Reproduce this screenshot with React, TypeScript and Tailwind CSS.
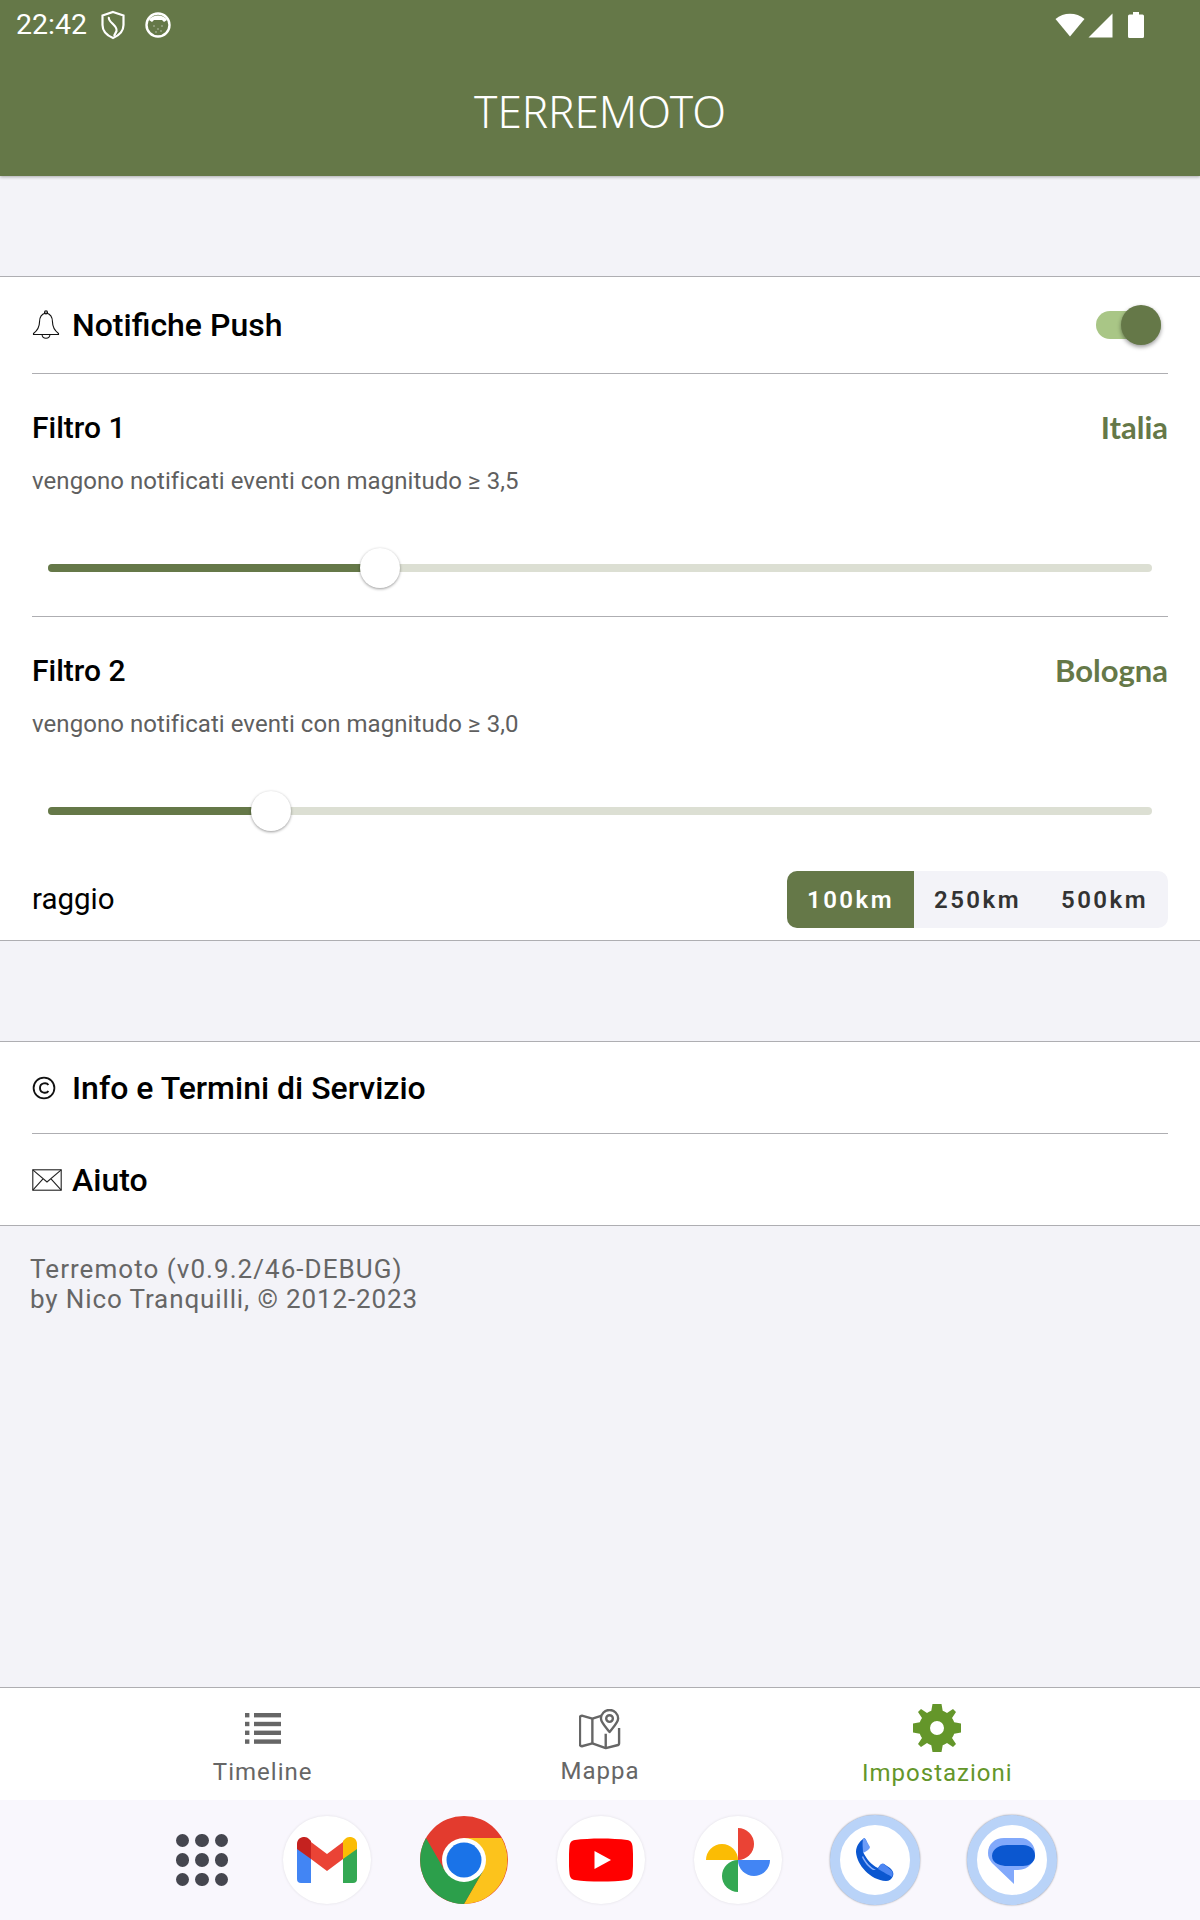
import React from "react";

const Shield = () => (
  <svg width="24" height="30" viewBox="0 0 24 30" fill="none" stroke="#fff" strokeWidth="2.2">
    <path d="M12 2 L22.5 5.5 V15 C22.5 21 18 25.5 12 28 C6 25.5 1.5 21 1.5 15 V5.5 Z" />
    <path d="M8 7 C6 12 17 15 15.5 21 L13 26" />
  </svg>
);

const Cat = () => (
  <svg width="26" height="26" viewBox="0 0 26 26">
    <circle cx="13" cy="13" r="11.5" fill="none" stroke="#fff" strokeWidth="2.4" />
    <path d="M4 8 C7 2 19 2 22 8 L19 10 L17 8 H9 L7 10 Z" fill="#fff" />
    <g fill="#fff" opacity="0.7">
      <circle cx="9" cy="14" r="0.7" /><circle cx="13" cy="17" r="0.7" /><circle cx="17" cy="14" r="0.7" /><circle cx="11" cy="20" r="0.7" /><circle cx="16" cy="19" r="0.7" />
    </g>
  </svg>
);

const StatusRight = () => (
  <div className="flex items-center">
    <svg width="30" height="26" viewBox="0 0 30 26"><path d="M0.5 7 C8.5 0 21.5 0 29.5 7 L15 24.5 Z" fill="#fff" /></svg>
    <svg width="25" height="25" viewBox="0 0 25 25" className="ml-[3px]"><path d="M24.5 0.5 V24.5 H0.5 Z" fill="#fff" /></svg>
    <svg width="16" height="26" viewBox="0 0 16 26" className="ml-[15px]"><path d="M5 0 H11 V2.5 H14.5 A1.5 1.5 0 0 1 16 4 V24.5 A1.5 1.5 0 0 1 14.5 26 H1.5 A1.5 1.5 0 0 1 0 24.5 V4 A1.5 1.5 0 0 1 1.5 2.5 H5 Z" fill="#fff" /></svg>
  </div>
);

const Bell = () => (
  <svg width="28" height="30" viewBox="0 0 28 30" fill="none" stroke="#111" strokeWidth="1.1" className="shrink-0">
    <path d="M14 3 C9 4 7.5 8 7.5 12 C7.5 17 6 20 1.5 23.5 V24.5 H26.5 V23.5 C22 20 20.5 17 20.5 12 C20.5 8 19 4 14 3 Z" />
    <circle cx="14" cy="2.4" r="1.5" />
    <path d="M10 24.5 C10.5 29.5 17.5 29.5 18 24.5" />
  </svg>
);

const Copy = () => (
  <svg width="24" height="24" viewBox="0 0 24 24" fill="none" stroke="#111" strokeWidth="1.8" className="shrink-0">
    <circle cx="12" cy="12" r="10.4" />
    <path d="M16.4 9 C14.8 6.4 8 6.4 8 12 C8 17.6 14.8 17.6 16.4 15" strokeWidth="1.9" />
  </svg>
);

const Mail = () => (
  <svg width="30" height="22" viewBox="0 0 30 22" fill="none" stroke="#222" strokeWidth="1.1" className="shrink-0">
    <rect x="0.8" y="0.8" width="28.4" height="20.4" />
    <path d="M0.8 0.8 L15 13 L29.2 0.8 M0.8 21.2 L11 9.8 M29.2 21.2 L19 9.8" />
  </svg>
);

const Slider = ({ pct }: { pct: number }) => (
  <div className="relative h-[8px] mx-[48px] rounded-full bg-[#dcdfd3]">
    <div className="h-full rounded-full bg-[#657848]" style={{ width: `${pct}px` }} />
    <div
      className="absolute top-[-16px] w-[40px] h-[40px] rounded-full bg-white shadow-[0_1px_3px_rgba(0,0,0,0.4)]"
      style={{ left: `${pct - 20}px` }}
    />
  </div>
);

const Filter = ({ title, place, mag }: { title: string; place: string; mag: string }) => (
  <div>
    <div className="flex items-center justify-between h-[36px] mt-[35px] mx-[32px]">
      <span className="text-[30px] font-medium text-black">{title}</span>
      <span className="text-[31px] font-bold text-[#657848] font-['Lato',sans-serif]">{place}</span>
    </div>
    <div className="mx-[32px] mt-[20px] h-[32px] leading-[32px] text-[24px] tracking-[0.06px] text-[#5f5f5f]">
      vengono notificati eventi con magnitudo ≥ {mag}
    </div>
  </div>
);

const Gmail = () => (
  <svg width="60" height="46" viewBox="0 0 60 46">
    <path d="M0 9 L14 19 V46 H4 A4 4 0 0 1 0 42 Z" fill="#4285f4" />
    <path d="M60 9 L46 19 V46 H56 A4 4 0 0 0 60 42 Z" fill="#34a853" />
    <path d="M14 5 L30 17 L46 5 V22 L30 34 L14 22 Z" fill="#ea4335" />
    <path d="M0 7 C0 0 8 -2 12 2 L14 4 V22 L0 12 Z" fill="#c5221f" />
    <path d="M60 7 C60 0 52 -2 48 2 L46 4 V22 L60 12 Z" fill="#fbbc04" />
  </svg>
);

const Chrome = () => (
  <svg width="88" height="88" viewBox="0 0 88 88">
    <circle cx="44" cy="44" r="44" fill="#e33b2e" />
    <path d="M44 22 H81.5 A44 44 0 0 1 44 88 L63 55 Z" fill="#fcc31c" />
    <path d="M6 22 L25 55 L44 44 L63 55 L44 88 A44 44 0 0 1 6 22 Z" fill="#2c9f4b" />
    <circle cx="44" cy="44" r="22" fill="#fff" />
    <circle cx="44" cy="44" r="17.5" fill="#1a73e8" />
  </svg>
);

const YouTube = () => (
  <svg width="64" height="44" viewBox="0 0 64 44">
    <path d="M6 2 C20 0 44 0 58 2 C62 2.5 63 5 63.5 8 C64.3 16 64.3 28 63.5 36 C63 39 62 41.5 58 42 C44 44 20 44 6 42 C2 41.5 1 39 0.5 36 C-0.3 28 -0.3 16 0.5 8 C1 5 2 2.5 6 2 Z" fill="#f00" />
    <path d="M25.5 13 L42 22 L25.5 31 Z" fill="#fff" />
  </svg>
);

const Photos = () => (
  <svg width="64" height="64" viewBox="0 0 64 64">
    <path d="M32 32 V0 A16 16 0 0 1 32 32 Z" fill="#ea4335" />
    <path d="M32 32 H64 A16 16 0 0 1 32 32 Z" fill="#4285f4" />
    <path d="M32 32 V64 A16 16 0 0 1 32 32 Z" fill="#34a853" />
    <path d="M32 32 H0 A16 16 0 0 1 32 32 Z" fill="#fbbc04" />
  </svg>
);

const Phone = () => (
  <svg width="38" height="44" viewBox="0 0 38 44">
    <path d="M7 1 C4 3 0 8 0 14 C1 27 14 42 30 43 C33 43 36 41 37 38 C38 35 37 33 34 30 L28 26 C25 25 24 27 22 30 C15 27 10 20 7 14 C11 12 13 10 12 7 L10 2 C9 0 8 0 7 1 Z" fill="#0b57d0" />
    <path d="M7 1 C8 0 9 0 10 2 L14 9 C14 11 11 13 7 15 C7 10 6 6 7 1 Z" fill="#6a9bf8" />
    <path d="M28 26 L36 33 C37 35 37 37 36 39 C33 37 27 34 22 31 C24 27 25 25 28 26 Z" fill="#4d86f2" />
    <path d="M7 18 C10 24 14 29 20 32 L17 32 C13 30 8 24 6 19 Z" fill="#8fb2f9" />
  </svg>
);

const Messages = () => (
  <svg width="48" height="48" viewBox="0 0 48 48">
    <path d="M16 2 H32 C42 2 47 10 47 17 C47 25 41 34 30 34 H26 V48 L4 27 C1 23 0 21 0 17 C0 8 7 2 16 2 Z" fill="#82a9fb" />
    <path d="M19 9 H35 C43 9 47 14 47 20 C47 27 40 30 35 30 H19 C14 30 4 28 4 20 C4 12 13 9 19 9 Z" fill="#0b57d0" />
  </svg>
);

const DockCircle = ({ children }: { children: React.ReactNode }) => (
  <div className="w-[88px] h-[88px] rounded-full bg-white flex items-center justify-center shrink-0 shadow-[0_0_3px_rgba(0,0,0,0.1)]">{children}</div>
);

const DockRing = ({ children }: { children: React.ReactNode }) => (
  <div className="w-[90px] h-[90px] -mx-[1px] rounded-full border-[10px] border-[#b9d3f8] bg-white flex items-center justify-center shrink-0 shadow-[0_0_2px_rgba(0,0,0,0.45)]">{children}</div>
);

export default function App() {
  return (
    <div className="w-[1200px] h-[1920px] flex flex-col bg-[#f3f3f8] font-['Roboto',sans-serif] overflow-hidden">
      <header className="h-[176px] shrink-0 bg-[#657848] shadow-[0_1px_3px_rgba(0,0,0,0.3)] relative z-10">
        <div className="h-[50px] flex items-center justify-between pl-[16px] pr-[56px]">
          <div className="flex items-center text-white">
            <span className="text-[28.5px] font-normal leading-none">22:42</span>
            <span className="ml-[14px] flex"><Shield /></span>
            <span className="ml-[20px] flex"><Cat /></span>
          </div>
          <StatusRight />
        </div>
        <div className="text-center text-white text-[44px] leading-[60px] mt-[31px] font-['Noto_Sans',sans-serif] font-light">TERREMOTO</div>
      </header>

      <section className="mt-[100px] bg-white border-y border-[#aeaeb2] h-[665px] shrink-0">
        <div className="mx-[32px] h-[97px] border-b border-[#aeaeb2] flex items-center justify-between">
          <div className="flex items-center">
            <Bell />
            <span className="ml-[12px] text-[32px] font-medium text-black">Notifiche Push</span>
          </div>
          <div className="relative w-[65px] h-[28px] mr-[7px] rounded-full bg-[#a9c686]">
            <div className="absolute right-0 top-[-6px] w-[40px] h-[40px] rounded-full bg-[#657848] shadow-[0_2px_4px_rgba(0,0,0,0.4)]" />
          </div>
        </div>

        <Filter title="Filtro 1" place="Italia" mag="3,5" />
        <div className="mt-[67px]"><Slider pct={332} /></div>
        <div className="mx-[32px] mt-[44px] border-b border-[#aeaeb2]" />

        <Filter title="Filtro 2" place="Bologna" mag="3,0" />
        <div className="mt-[67px]"><Slider pct={223} /></div>

        <div className="mx-[32px] mt-[56px] flex items-center justify-between">
          <span className="text-[29.5px] text-black">raggio</span>
          <div className="flex h-[57px] w-[381px] rounded-[10px] overflow-hidden bg-[#f3f3f8] text-[24px] font-semibold tracking-[2.5px] text-[#333]">
            <div className="w-[127px] bg-[#657848] text-white flex items-center justify-center">100km</div>
            <div className="w-[127px] flex items-center justify-center">250km</div>
            <div className="w-[127px] flex items-center justify-center">500km</div>
          </div>
        </div>
      </section>

      <section className="mt-[100px] bg-white border-y border-[#aeaeb2] shrink-0">
        <div className="mx-[32px] h-[92px] border-b border-[#aeaeb2] flex items-center">
          <Copy />
          <span className="ml-[16px] text-[32px] font-medium text-black">Info e Termini di Servizio</span>
        </div>
        <div className="mx-[32px] h-[91px] flex items-center">
          <Mail />
          <span className="ml-[10px] text-[32px] font-medium text-black">Aiuto</span>
        </div>
      </section>

      <div className="ml-[30px] mt-[28px] text-[26px] leading-[30px] text-[#666]">
        <div className="tracking-[1.05px]">Terremoto (v0.9.2/46-DEBUG)</div>
        <div className="tracking-[0.88px]">by Nico Tranquilli, © 2012-2023</div>
      </div>

      <div className="flex-1" />

      <nav className="h-[113px] shrink-0 bg-white border-t border-[#aeaeb2] grid grid-cols-3 px-[94px] text-[24px] tracking-[1px] text-[#666]">
        <div className="flex flex-col items-center">
          <svg width="36" height="32" viewBox="0 0 36 32" className="mt-[25px]" fill="#666">
            <rect x="0" y="0" width="4.4" height="4.4" /><rect x="9" y="0" width="27" height="4.4" />
            <rect x="0" y="8.8" width="4.4" height="4.4" /><rect x="9" y="8.8" width="27" height="4.4" />
            <rect x="0" y="17.6" width="4.4" height="4.4" /><rect x="9" y="17.6" width="27" height="4.4" />
            <rect x="0" y="26.4" width="4.4" height="4.4" /><rect x="9" y="26.4" width="27" height="4.4" />
          </svg>
          <span className="mt-[12px] leading-[30px]">Timeline</span>
        </div>
        <div className="flex flex-col items-center">
          <svg width="42" height="42" viewBox="0 0 44 44" className="mt-[21px]" fill="none" stroke="#666" strokeWidth="2.5" strokeLinejoin="round">
            <path d="M24 7 L14 10 L3 7 C2 7 1 8 1 9 V37 C1 38 2 39 3 39 L14 36 L28 41 L40 38 C41 38 42 37 42 36 V20" />
            <path d="M14 10 V36 M28 26 V41" />
            <path d="M32 24 C27 18 23 14 23 10 A9 9 0 0 1 41 10 C41 14 37 18 32 24 Z" />
            <circle cx="32" cy="10" r="3.5" />
          </svg>
          <span className="mt-[5px] leading-[30px]">Mappa</span>
        </div>
        <div className="flex flex-col items-center text-[#64962a]">
          <svg width="48" height="48" viewBox="0 0 48 48" className="mt-[16px] -ml-[1px]" fill="#64962a">
            <path fillRule="evenodd" d="M19.5 0 H28.5 L29.7 6.8 Q32 7.6 34 9 L40 5 L43 8 L39 14 Q40.4 16 41.2 18.3 L48 19.5 V28.5 L41.2 29.7 Q40.4 32 39 34 L43 40 L40 43 L34 39 Q32 40.4 29.7 41.2 L28.5 48 H19.5 L18.3 41.2 Q16 40.4 14 39 L8 43 L5 40 L9 34 Q7.6 32 6.8 29.7 L0 28.5 V19.5 L6.8 18.3 Q7.6 16 9 14 L5 8 L8 5 L14 9 Q16 7.6 18.3 6.8 Z M24 17 A7 7 0 1 0 24 31 A7 7 0 1 0 24 17 Z" />
          </svg>
          <span className="mt-[6px] leading-[30px]">Impostazioni</span>
        </div>
      </nav>

      <div className="h-[120px] shrink-0 bg-[#f9f7fd] flex items-center gap-[49px] pl-[170px]">
        <div className="w-[64px] h-[88px] shrink-0 flex items-center justify-center">
          <div className="grid grid-cols-3 gap-[6.5px]">
            {[0, 1, 2, 3, 4, 5, 6, 7, 8].map((i) => (
              <div key={i} className="w-[13.3px] h-[13.3px] rounded-full bg-[#45464f]" />
            ))}
          </div>
        </div>
        <DockCircle><Gmail /></DockCircle>
        <div className="w-[88px] h-[88px] shrink-0"><Chrome /></div>
        <DockCircle><YouTube /></DockCircle>
        <DockCircle><Photos /></DockCircle>
        <DockRing><Phone /></DockRing>
        <DockRing><Messages /></DockRing>
      </div>
    </div>
  );
}
